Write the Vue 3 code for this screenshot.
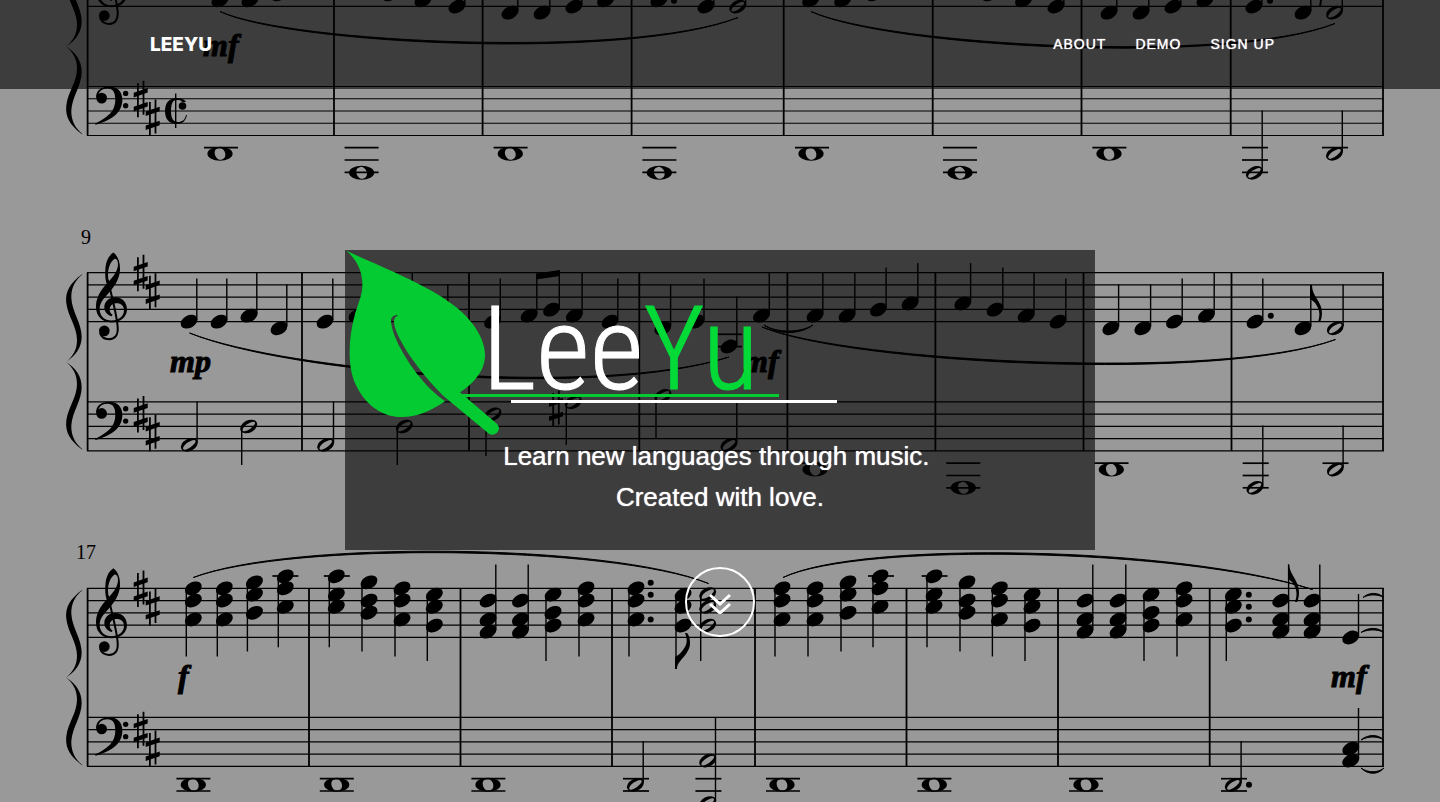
<script setup>
const DOWN = 1
const UP = -1

const systems = [
  { top: -42.6, bass: 86.5, bars: [334, 482.6, 631.6, 783.7, 932.7, 1081.5, 1230.7], number: '', numberX: 0 },
  { top: 272.7, bass: 401.8, bars: [302, 469, 639.3, 787.4, 935.4, 1083.5, 1231.5], number: '9', numberX: 81 },
  { top: 588.4, bass: 717.4, bars: [309, 460.5, 612, 755, 906.5, 1058, 1209.7], number: '17', numberX: 76 },
]
const lines = [0, 1, 2, 3, 4]
const gap = 12.25

/* note: [head x, [head ys], stem end y, stem direction] */
const t1 = [
  [220, [0.4]], [250, [0.4]], [279, [-5.7]], [390, [-5.7]], [423, [0.4]], [457, [6.6]],
  [510, [12.7]], [542, [12.7]], [574, [6.6]], [605.6, [0.4]], [659, [0.4]], [706, [6.6]],
  [810.7, [0.4]], [842.7, [0.4]], [874, [-5.7]], [989.5, [-5.7]], [1023.6, [0.4]], [1056, [6.6]],
  [1109, [12.7]], [1141, [12.7]], [1173, [6.6]], [1205, [0.4]], [1254, [6.6]], [1303, [12.7]],
].map(([x, ys]) => [x, ys, -30, UP])

const t2 = [
  [189, 321.7, 278.5], [219, 321.7, 278.5], [249, 315.7, 272.5], [279, 328.3, 284.5],
  [325, 321.7, 278.5], [357, 315.7, 272.5], [404.5, 315.7, 272.5], [440, 328.3, 284.5],
  [492.5, 321.7, 278.5], [529, 315.7, 275], [551.5, 309.7, 272], [574.3, 315.7, 272.5], [610, 321.7, 278.5],
  [662.8, 328.3, 284.5], [696.2, 321.7, 278.5], [729, 346.5, 296.5], [761.5, 315.7, 272.5],
  [815, 315.7, 272.5], [847, 315.7, 272.5], [878.3, 309.7, 267.5], [910, 303.5, 263],
  [962.8, 303.5, 263], [995, 309.7, 267.5], [1026.2, 315.7, 272.5], [1058, 321.7, 278.5],
  [1110.8, 328.3, 284.5], [1142.8, 328.3, 284.5], [1174.4, 321.7, 278.5], [1206.4, 315.7, 272.5],
  [1255, 321.7, 278.5], [1303, 328.3, 285],
].map(([x, y, end]) => [x, [y], end, UP])

const chords = {
  a: [[588.3, 600.6, 619.5], 656.5, DOWN],
  b: [[582.3, 594.6, 612.8], 651.5, DOWN],
  c: [[576.3, 588.3, 606.8], 647.3, DOWN],
  d: [[576.3, 594.6, 606.8], 647.3, DOWN],
  e: [[582.3, 600.6, 612.8], 651.5, DOWN],
  f: [[594.6, 606.8, 625.6], 661, DOWN],
  g: [[600.6, 619.5, 631.7], 564.5, UP],
  h: [[594.6, 612.8, 625.6], 661, DOWN],
}
const t3 = [
  [193.3, 'a'], [224.3, 'a'], [254.4, 'b'], [285.3, 'c'],
  [336.3, 'd'], [369, 'e'], [402, 'a'], [434.3, 'f'],
  [488, 'g'], [520.4, 'g'], [553, 'h'], [586, 'a'], [636, 'a'], [683, 'f'],
  [782, 'a'], [815, 'a'], [848, 'b'], [880, 'c'],
  [934, 'd'], [967, 'e'], [999.4, 'a'], [1032, 'f'],
  [1085, 'g'], [1118, 'g'], [1151, 'h'], [1184, 'a'],
  [1233.3, 'f'], [1280.8, 'g'], [1312, 'g'],
].map(([x, k]) => [x, ...chords[k]])

const extra = [
  [1350.7, [637.5], 594, UP],
  [1350.7, [748.6, 760.6], 708, UP],
]
const filled = [...t1, ...t2, ...t3, ...extra]

const halves = [
  [737.8, [6.6], -30, UP], [1334.5, [12.7], -30, UP],
  [1254.4, [172.8], 110.5, UP], [1334.5, [153.8], 110.5, UP],
  [1335.3, [328.3], 284.5, UP],
  [189.3, [444.8], 401.5, UP], [248.7, [426.5], 465, DOWN], [325.7, [444.8], 401.5, UP],
  [404.3, [426.5], 465, DOWN], [493, [414.3], 456, DOWN], [573.3, [402.3], 445, DOWN],
  [663, [395.8], 439, DOWN], [729, [444.8], 401.5, UP],
  [1255, [487.8], 425.5, UP], [1335.3, [469.6], 425.5, UP],
  [707.7, [594, 606.8, 625.6], 661, DOWN],
  [635.4, [784.8], 741, UP], [707.7, [760.6, 803], 717, UP], [1233.3, [784.8], 741, UP],
]
const stemmed = [
  ...filled.map((n) => [...n, '#head']),
  ...halves.map((n) => [...n, '#half']),
]

const wholes = [
  [220, 153.8], [361.6, 172.8], [510.3, 153.8], [659.3, 172.8], [811, 153.8], [960, 172.8], [1109, 153.8],
  [815, 469.6], [963.3, 487.8], [1111.3, 469.6],
  [193.3, 784.8], [336.7, 784.8], [488, 784.8], [782, 784.8], [934.3, 784.8], [1086, 784.8],
]

/* ledger: [centre x, half width, [ys]] */
const A = [147.6, 160, 172.4]
const B = [463.2, 475.5, 487.8]
const C = [778.7, 791]
const ledgers = [
  [221, 17, [A[0]]], [361.6, 17, A], [510.6, 17, [A[0]]], [659.4, 17, A], [812, 17, [A[0]]], [960, 17, A], [1109.4, 17, [A[0]]],
  [1255, 13, A], [1335, 13, [A[0]]],
  [730, 12, [334.3, 346.6]],
  [815, 17, [B[0]]], [963.3, 17, B], [1111.5, 17, [B[0]]], [1255.7, 13, B], [1335.5, 13, [B[0]]],
  [285.4, 13, [576]], [336.8, 13, [576]], [881, 13, [576]], [934.6, 13, [576]],
  [193.4, 17, C], [336.8, 17, C], [488.4, 17, C], [783, 17, C], [934.4, 17, C], [1086, 17, C],
  [636, 13, C], [708.4, 13, C], [1234, 13, C],
]

const dots = [
  [674, 0.8], [1270, 0.8], [1270.8, 315.7],
  [650.7, 582.7], [650.7, 594.7], [650.7, 619.5],
  [1248.8, 594.7], [1248.8, 606.7], [1248.8, 619.5], [1249, 784.8],
]

const slur = (x0, y0, ax, ay, bx, by, x1, y1, w = 2) =>
  `M${x0} ${y0}C${ax} ${ay} ${bx} ${by} ${x1} ${y1}C${bx} ${by + w} ${ax} ${ay + w} ${x0} ${y0}Z`
const slurs = [
  slur(220, 11.5, 290, 43, 630, 59, 738, 17.5),
  slur(811, 11.5, 890, 46, 1230, 64, 1335, 23.5),
  slur(189.5, 333, 290, 372, 600, 397, 729, 357),
  slur(762, 327, 850, 362, 1220, 381, 1335.5, 339.5),
  slur(764, 325, 777, 333, 800, 333, 813, 325),
  slur(193.3, 577.5, 290, 540, 610, 543, 708.5, 583.5),
  slur(783, 577.5, 860, 540, 1180, 546, 1312.5, 589.5),
  slur(1363, 597.5, 1369, 592, 1378, 592, 1384, 597.5),
  slur(1361, 632.5, 1368, 627, 1378, 627, 1384, 632.5),
  slur(1361, 740, 1368, 734, 1378, 734, 1384, 740),
  slur(1361, 768, 1368, 773, 1378, 773, 1384, 768),
]

const dynamics = [
  ['mf', 203, 56], ['mp', 170, 372], ['mf', 743, 372], ['f', 178, 687], ['mf', 1331, 687],
]

const stem = ([x, ys, end, dir]) =>
  dir === UP ? `M${x + 7.8} ${ys[ys.length - 1] - 2}V${end}` : `M${x - 7} ${ys[0] + 2}V${end}`
const nav = ['About', 'Demo', 'Sign up']
</script>

<template>
  <div class="page">
    <svg class="score" viewBox="0 0 1440 802" preserveAspectRatio="xMidYMid slice" aria-hidden="true">
      <defs>
        <ellipse id="head" rx="9" ry="6.2" transform="rotate(-28)" />
        <path id="half" fill-rule="evenodd" d="M-7.95 4.22A9 6.1-28 1 1 7.95-4.22A9 6.1-28 1 1-7.95 4.22ZM-6.1 4.3A7.4 2.7-35 1 0 6.1-4.3A7.4 2.7-35 1 0-6.1 4.3Z" />
        <path id="whole" fill-rule="evenodd" d="M-12.6 0A12.6 7 0 1 1 12.6 0A12.6 7 0 1 1-12.6 0ZM-2.4-5.4A4.4 6-25 1 0 2.4 5.4A4.4 6-25 1 0-2.4-5.4Z" />
        <g id="sharp">
          <path d="M-2.8-15.5V18.5M2.8-18V16" stroke="#000" stroke-width="1.8" />
          <path d="M-7-6L7-10.8V-6.2L-7-1.4ZM-7 8L7 3.2V7.8L-7 12.6Z" />
        </g>
        <g id="treble">
          <g transform="translate(50 -52.5) scale(.3333)">
            <path fill-rule="evenodd" d="M190 97C205 108 211 128 210 150C208 178 193 198 180 214C162 234 149 247 149 266C149 289 164 301 184 301C207 301 222 287 222 270C222 256 212 249 201 249C187 249 179 257 179 268C179 276 183 281 188 284L185 288C172 284 163 275 163 261C163 243 178 231 196 231C217 231 231 247 231 268C231 290 212 307 185 307C156 307 138 288 138 260C138 232 152 211 170 191C166 178 165 165 166 150C167 125 175 107 190 97ZM194 116C184 122 174 140 174 165C174 172 175 178 177 183C194 165 204 148 204 132C204 122 200 115 194 116Z" />
            <path d="M174 180C184 225 200 280 203 320C205 345 195 357 177 357C164 357 154 350 150 338" fill="none" stroke="#000" stroke-width="6" />
            <circle cx="163" cy="332" r="16" />
          </g>
        </g>
        <g id="bassclef">
          <g transform="translate(50 -181.7) scale(.3333)">
            <circle cx="155" cy="580" r="16" />
            <path d="M138 580C138 555 155 545 178 545C204 545 217 562 217 585C217 625 182 648 136 660L136 656C173 638 196 620 196 585C196 562 189 551 172 551C156 551 146 560 144 574Z" />
            <circle cx="227" cy="566" r="8" />
            <circle cx="227" cy="603" r="8" />
          </g>
        </g>
        <path id="brace" d="M96 -263C60 -236 45 -211 49 -176C54 -136 81 -106 81 -66C81 -36 68 -16 48 0C76 -18 95 -41 95 -76C95 -116 66 -151 64 -191C63 -221 75 -244 97 -262Z" />
      </defs>

      <g v-for="s in systems" :key="s.top">
        <path v-for="i in lines" :key="'t' + i" class="line" :d="`M87 ${s.top + i * gap}H1384`" />
        <path v-for="i in lines" :key="'b' + i" class="line" :d="`M87 ${s.bass + i * gap}H1384`" />
        <path v-for="x in [87.6, ...s.bars, 1383]" :key="x" class="bar" :d="`M${x} ${s.top}V${s.bass + 4 * gap}`" />
        <g :transform="`translate(50 ${s.top + 89.2}) scale(.3333)`">
          <use href="#brace" />
          <use href="#brace" transform="scale(1 -1)" />
        </g>
        <use href="#treble" :transform="`translate(0 ${s.top})`" />
        <use href="#bassclef" :transform="`translate(0 ${s.bass})`" />
        <use href="#sharp" :transform="`translate(140.7 ${s.top})`" />
        <use href="#sharp" :transform="`translate(152.7 ${s.top + 18.6})`" />
        <use href="#sharp" :transform="`translate(140.7 ${s.bass + 12.3})`" />
        <use href="#sharp" :transform="`translate(152.7 ${s.bass + 31})`" />
        <text v-if="s.number" class="measure" :x="s.numberX" :y="s.top - 29">{{ s.number }}</text>
      </g>

      <path d="M186 102C184 99 181 98 177 98C169 98 165 103 165 111C165 119 169 124 177 124C183 124 186 120 187 115H186C185 120 182 122 178 122C173 122 171 118 171 111C171 103 173 100 177 100C179 100 181 100 182 102Z" />
      <circle cx="182.5" cy="106" r="3.8" />
      <path class="stem" d="M175.7 93.5V128" />

      <g v-for="(n, i) in stemmed" :key="'n' + i">
        <use v-for="y in n[1]" :key="y" :href="n[4]" :transform="`translate(${n[0]} ${y})`" />
        <path class="stem" :d="stem(n)" />
      </g>
      <use v-for="(w, i) in wholes" :key="'w' + i" href="#whole" :transform="`translate(${w[0]} ${w[1]})`" />
      <g v-for="(l, i) in ledgers" :key="'l' + i">
        <path v-for="y in l[2]" :key="y" class="ledger" :d="`M${l[0] - l[1]} ${y}h${l[1] * 2}`" />
      </g>
      <circle v-for="(d, i) in dots" :key="'d' + i" :cx="d[0]" :cy="d[1]" r="3" />
      <path v-for="d in slurs" :key="d" class="slur" :d="d" />
      <path d="M536 273.5L560 270V276L536 279.5Z" />
      <use href="#sharp" transform="translate(556 408.5)" />
      <path d="M1310 285H1312C1312 297 1322 301 1322 313C1322 317 1321 320 1320 322H1318C1320 316 1320 311 1317 306C1315 302 1312 300 1310 299Z" />
      <path d="M1288 564.5H1289C1290 575 1299 581 1299 592C1299 597 1298 600 1297 602H1295C1297 596 1297 592 1295 587C1293 582 1290 580 1288 579Z" />
      <path d="M1320 6C1321 3 1321 0 1321-3" fill="none" stroke="#000" stroke-width="2" />
      <path d="M675 669H677C677 660 690 655 690 643C690 639 689 635 687 633H685C688 640 687 645 683 650C680 654 677 656 675 657Z" />
      <text v-for="(d, i) in dynamics" :key="'y' + i" class="dynamic" :x="d[1]" :y="d[2]">{{ d[0] }}</text>
    </svg>

    <header class="header">
      <div class="container">
        <a class="brand" href="#">LEEYU</a>
        <nav class="nav">
          <a v-for="item in nav" :key="item" href="#">{{ item }}</a>
        </nav>
      </div>
    </header>

    <main class="hero">
      <section class="intro">
        <svg class="logo" viewBox="0 0 500 186" role="img" aria-label="LeeYu">
          <path
            class="leaf"
            transform="translate(-5 -10) scale(.3333)"
            d="M18 31C60 55 250 125 340 195C400 240 438 300 435 350C433 395 400 430 360 457L468 549A18 18 0 0 1 447 581L322 478C255 420 160 290 162 244C163 234 168 228 175 226C163 224 153 230 153 242C155 290 205 370 240 412C265 445 290 465 315 484C270 515 230 531 185 531C115 531 65 480 42 422C22 370 26 290 45 222C60 175 68 160 67 130C66 90 50 60 18 31Z"
          />
          <path class="rule-green" d="M116 145.5H434" />
          <path class="rule-white" d="M166 151.5H492" />
          <text class="word" x="137" y="139">Lee<tspan class="accent">Yu</tspan></text>
        </svg>
        <p class="tagline">Learn new languages through music.&nbsp;<br />Created with love.</p>
      </section>
      <a class="more" href="#" aria-label="Scroll down">
        <svg viewBox="0 0 24 24" aria-hidden="true">
          <path d="M2 5L12 14L22 5M2 14L12 23L22 14" />
        </svg>
      </a>
    </main>
  </div>
</template>

<style>
body {
  margin: 0;
  background: #999;
}
</style>

<style scoped>
.page {
  position: relative;
  min-height: 100vh;
  overflow: hidden;
  background: #999;
  color: #fff;
  font-family: "Liberation Sans", Arial, sans-serif;
}
.score {
  position: absolute;
  inset: 0;
  width: 100%;
  height: 100%;
}
.line,
.ledger,
.bar,
.stem {
  fill: none;
  stroke: #000;
}
.line {
  stroke-width: 1.2;
}
.ledger {
  stroke-width: 1.7;
}
.bar {
  stroke-width: 1.8;
}
.stem {
  stroke-width: 1.4;
}
.slur {
  stroke: #000;
  stroke-width: 1;
}
.measure {
  font: 20px "Liberation Serif", serif;
}
.dynamic {
  font: italic bold 32px "Liberation Serif", serif;
  stroke: #000;
  stroke-width: 1px;
}
.header {
  position: relative;
  padding-bottom: 1px;
  background: rgba(0, 0, 0, 0.6);
}
.container {
  display: flex;
  align-items: center;
  justify-content: space-between;
  box-sizing: border-box;
  max-width: 1140px;
  height: 88px;
  margin: 0 auto;
  padding-right: 15px;
}
.brand {
  color: #fff;
  font: 800 19px Inter, sans-serif;
  text-decoration: none;
}
.nav {
  display: flex;
  gap: 29px;
}
.nav a {
  color: #fff;
  font-size: 14px;
  letter-spacing: 1px;
  text-decoration: none;
  text-transform: uppercase;
  text-shadow: 0 0 1px #fff;
}
.hero {
  position: relative;
  display: flex;
  flex-direction: column;
  align-items: center;
  padding-top: 161px;
}
.intro {
  width: 750px;
  max-width: 100%;
  min-height: 300px;
  background: rgba(0, 0, 0, 0.6);
}
.logo {
  display: block;
  width: 500px;
  max-width: 100%;
}
.leaf {
  fill: #03cb31;
}
.rule-green,
.rule-white {
  stroke-width: 3;
}
.rule-green {
  stroke: #03cb31;
}
.rule-white {
  stroke: #fff;
}
.word {
  fill: #fff;
  stroke: #fff;
  stroke-width: 1px;
  font: 300 117px "Roboto Condensed", "Liberation Sans Narrow", Roboto, sans-serif;
}
.accent {
  fill: #03da38;
  stroke: #03da38;
}
.tagline {
  margin: 0;
  font-size: 26px;
  line-height: 41px;
  text-align: center;
  text-shadow: 0 0 1px #fff;
}
.more {
  display: flex;
  align-items: center;
  justify-content: center;
  box-sizing: border-box;
  width: 70px;
  height: 70px;
  margin-top: 17px;
  border: 2px solid #fff;
  border-radius: 50%;
}
.more svg {
  width: 24px;
  height: 24px;
  fill: none;
  stroke: #fff;
  stroke-width: 3;
}
</style>
